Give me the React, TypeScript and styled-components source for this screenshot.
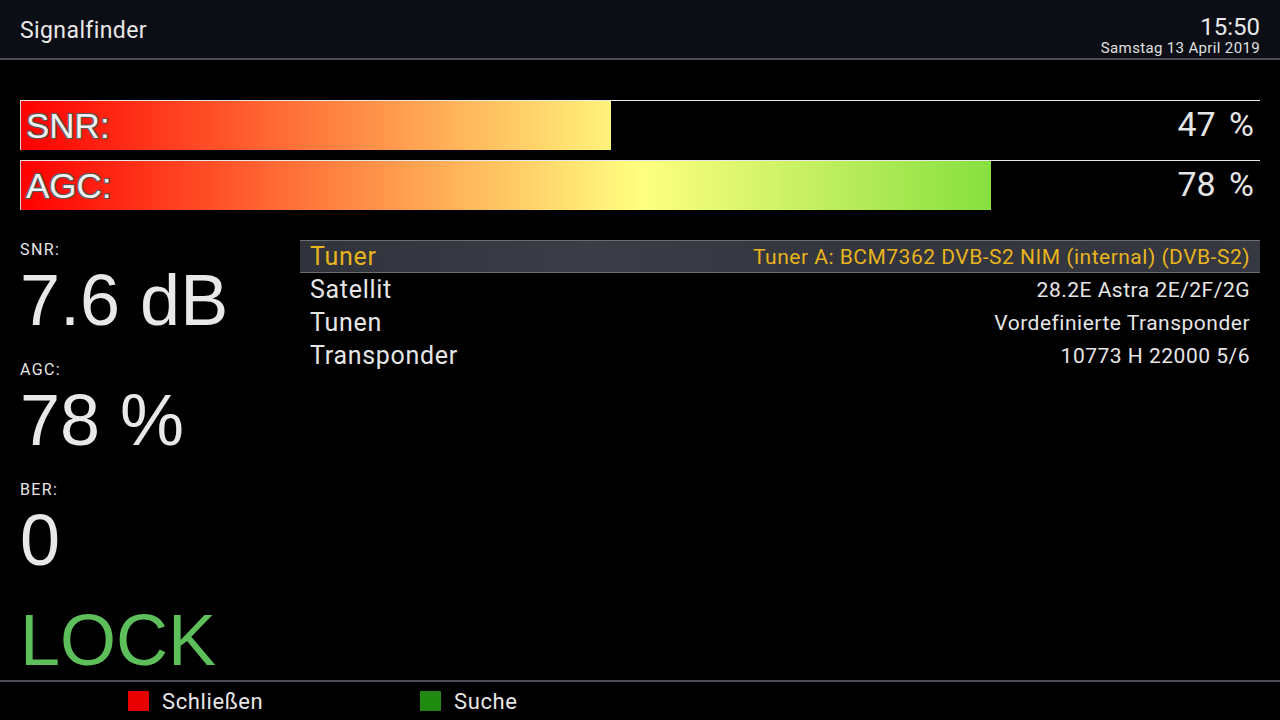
import React from "react";
import styled, { createGlobalStyle } from "styled-components";

const Global = createGlobalStyle`
  html, body { margin: 0; padding: 0; background: #000; }
  body { width: 1280px; height: 720px; overflow: hidden; font-family: Roboto, "Liberation Sans", sans-serif; }
`;

const Screen = styled.div`
  width: 1280px;
  height: 720px;
  background: #000;
  display: flex;
  flex-direction: column;
  color: #e6e6e6;
`;

const Header = styled.header`
  height: 58px;
  background: #0c0e15;
  border-bottom: 2px solid #4c4d55;
  display: flex;
  justify-content: space-between;
  align-items: flex-start;
  padding: 0 20px;
  box-sizing: content-box;
`;

const Title = styled.h1`
  margin: 0;
  padding-top: 16px;
  font-family: Roboto, sans-serif;
  font-weight: 400;
  font-size: 23px;
  letter-spacing: 0.4px;
  line-height: 30px;
  color: #e8e8e8;
`;

const Clock = styled.div`
  display: flex;
  flex-direction: column;
  align-items: flex-end;
  padding-top: 14px;
`;

const Time = styled.div`
  font-family: Roboto, sans-serif;
  font-size: 24px;
  line-height: 26px;
  color: #e8e8e8;
`;

const DateText = styled.div`
  font-family: Roboto, sans-serif;
  font-size: 15px;
  letter-spacing: 0.35px;
  line-height: 16px;
  color: #e0e0e0;
`;

const Main = styled.main`
  flex: 1;
  display: flex;
  flex-direction: column;
  padding: 40px 20px 0;
`;

const Bars = styled.div`
  display: flex;
  flex-direction: column;
  gap: 10px;
`;

const Track = styled.div`
  position: relative;
  height: 49px;
  border-top: 1px solid #e8e8e8;
  border-left: 1px solid #d8d8d8;
  display: flex;
  align-items: center;
  justify-content: space-between;
`;

const Fill = styled.div`
  position: absolute;
  left: 0;
  top: 0;
  bottom: 0;
  background-image: linear-gradient(
    to right,
    #ff0000 0%,
    #ff8040 25%,
    #ffff80 50%,
    #88e040 78%,
    #40d040 100%
  );
  background-size: 1239px 100%;
  background-repeat: no-repeat;
`;

const BarLabel = styled.span`
  position: relative;
  padding-left: 5px;
  font-family: "Liberation Sans", Arial, sans-serif;
  font-size: 35px;
  line-height: 40px;
  color: #f2f2f2;
  text-shadow: -1px -1px 0 #555, 1px -1px 0 #555, -1px 1px 0 #555, 1px 1px 0 #555;
`;

const BarValue = styled.span`
  position: relative;
  padding-right: 6px;
  padding-bottom: 3px;
  font-family: Roboto, sans-serif;
  font-size: 34px;
  word-spacing: 5px;
  line-height: 40px;
  color: #e6e6e6;
`;

const Body = styled.div`
  display: flex;
  margin-top: 30px;
  flex: 1;
`;

const Stats = styled.div`
  width: 280px;
  display: flex;
  flex-direction: column;
`;

const Stat = styled.div`
  display: flex;
  flex-direction: column;
  margin-bottom: 20px;
`;

const StatLabel = styled.div`
  font-family: Roboto, sans-serif;
  font-size: 16px;
  letter-spacing: 1.4px;
  line-height: 20px;
  color: #e6e6e6;
`;

const StatValue = styled.div`
  font-family: "Liberation Sans", Arial, sans-serif;
  font-size: 72px;
  line-height: 80px;
  color: #e8e8e8;
`;

const Lock = styled.div`
  font-family: "Liberation Sans", Arial, sans-serif;
  font-size: 72px;
  line-height: 80px;
  color: #5cbf5a;
`;

const List = styled.div`
  flex: 1;
  display: flex;
  flex-direction: column;
`;

const Row = styled.div<{ $selected?: boolean }>`
  height: ${(p) => (p.$selected ? "31px" : "33px")};
  display: flex;
  align-items: center;
  justify-content: space-between;
  padding: 0 10px;
  background: ${(p) =>
    p.$selected
      ? "linear-gradient(to right, #30323c, #3a3c46 30%, #32343e 60%, #363842)"
      : "transparent"};
  border-top: ${(p) => (p.$selected ? "1px solid #6c6d75" : "none")};
  border-bottom: ${(p) => (p.$selected ? "1px solid #6c6d75" : "none")};
  color: ${(p) => (p.$selected ? "#e7b41c" : "#e6e6e6")};
`;

const RowName = styled.span`
  font-family: Roboto, sans-serif;
  font-size: 25px;
  letter-spacing: 0.7px;
`;

const RowValue = styled.span`
  font-family: Roboto, sans-serif;
  font-size: 21px;
  letter-spacing: 0.5px;
`;

const Footer = styled.footer`
  height: 38px;
  border-top: 2px solid #4c4d55;
  display: flex;
  align-items: center;
  padding-left: 128px;
`;

const Key = styled.div`
  display: flex;
  align-items: center;
  gap: 13px;
  width: 292px;
`;

const Swatch = styled.span<{ $color: string }>`
  width: 21px;
  height: 20px;
  background: ${(p) => p.$color};
  border-radius: 1px;
`;

const KeyText = styled.span`
  font-family: Roboto, sans-serif;
  font-size: 22px;
  letter-spacing: 0.6px;
  color: #e6e6e6;
`;

const bars = [
  { label: "SNR:", pct: 47.6 },
  { label: "AGC:", pct: 78.3 },
];

const rows = [
  { name: "Tuner", value: "Tuner A: BCM7362 DVB-S2 NIM (internal) (DVB-S2)", selected: true },
  { name: "Satellit", value: "28.2E Astra 2E/2F/2G" },
  { name: "Tunen", value: "Vordefinierte Transponder" },
  { name: "Transponder", value: "10773 H 22000 5/6" },
];

export default function App() {
  return (
    <Screen>
      <Global />
      <Header>
        <Title>Signalfinder</Title>
        <Clock>
          <Time>15:50</Time>
          <DateText>Samstag 13 April 2019</DateText>
        </Clock>
      </Header>
      <Main>
        <Bars>
          {bars.map((b) => (
            <Track key={b.label}>
              <Fill style={{ width: `${b.pct}%` }} />
              <BarLabel>{b.label}</BarLabel>
              <BarValue>{Math.floor(b.pct)} %</BarValue>
            </Track>
          ))}
        </Bars>
        <Body>
          <Stats>
            <Stat>
              <StatLabel>SNR:</StatLabel>
              <StatValue>7.6 dB</StatValue>
            </Stat>
            <Stat>
              <StatLabel>AGC:</StatLabel>
              <StatValue>78 %</StatValue>
            </Stat>
            <Stat>
              <StatLabel>BER:</StatLabel>
              <StatValue>0</StatValue>
            </Stat>
            <Lock>LOCK</Lock>
          </Stats>
          <List>
            {rows.map((r) => (
              <Row key={r.name} $selected={r.selected}>
                <RowName>{r.name}</RowName>
                <RowValue>{r.value}</RowValue>
              </Row>
            ))}
          </List>
        </Body>
      </Main>
      <Footer>
        <Key>
          <Swatch $color="#e80000" />
          <KeyText>Schließen</KeyText>
        </Key>
        <Key>
          <Swatch $color="#218a10" />
          <KeyText>Suche</KeyText>
        </Key>
      </Footer>
    </Screen>
  );
}
